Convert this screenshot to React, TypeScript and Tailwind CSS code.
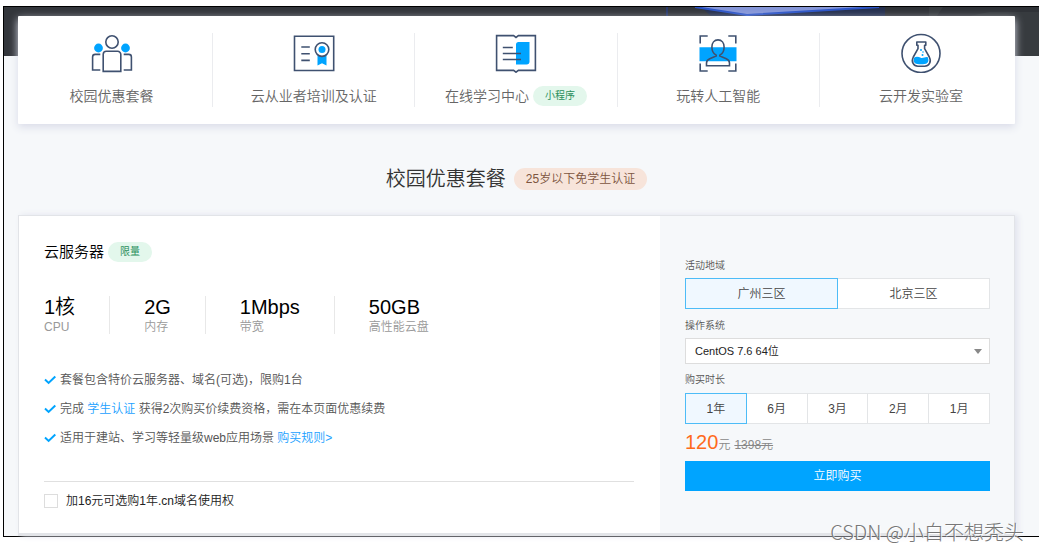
import { useState, type ReactNode } from "react";

interface Feature {
  label: string;
  tag?: string;
  icon: ReactNode;
}

const features: Feature[] = [
  { label: "校园优惠套餐", icon: <CampusIcon /> },
  { label: "云从业者培训及认证", icon: <CertificateIcon /> },
  { label: "在线学习中心", tag: "小程序", icon: <BookIcon /> },
  { label: "玩转人工智能", icon: <FaceIcon /> },
  { label: "云开发实验室", icon: <LabIcon /> },
];

const specs = [
  { value: "1核", label: "CPU" },
  { value: "2G", label: "内存" },
  { value: "1Mbps", label: "带宽" },
  { value: "50GB", label: "高性能云盘" },
];

const regions = ["广州三区", "北京三区"];
const durations = ["1年", "6月", "3月", "2月", "1月"];

function CampusIcon() {
  return (
    <svg width="42" height="40" viewBox="0 0 42 40" fill="none" stroke="#3f5170" strokeWidth="1.6">
      <circle cx="7.5" cy="15" r="4.4" fill="#00a4ff" stroke="none" />
      <circle cx="34.5" cy="15" r="4.4" fill="#00a4ff" stroke="none" />
      <circle cx="21" cy="9" r="6.2" />
      <path d="M12.2 38.4V21.5a3.2 3.2 0 0 1 3.2-3.2h11.2a3.2 3.2 0 0 1 3.2 3.2v16.9z" />
      <path d="M9.3 21.4H4.2a2.6 2.6 0 0 0-2.6 2.6v13h7.7M32.7 21.4h5.1a2.6 2.6 0 0 1 2.6 2.6v13h-7.7" />
    </svg>
  );
}

function CertificateIcon() {
  return (
    <svg width="42" height="40" viewBox="0 0 42 40" fill="none" stroke="#3f5170" strokeWidth="1.6">
      <path d="M1.5 3.3h39.2v34.2H1.5z" />
      <path d="M8.3 14h8.5M8.3 20.7h8.5M8.3 27.4h8.5" />
      <path d="M24.5 22h9v10.5l-4.5-2.2-4.5 2.2z" fill="#00a4ff" stroke="none" />
      <circle cx="29" cy="16.6" r="6.8" fill="#fff" />
      <circle cx="29" cy="16.6" r="3.5" fill="#00a4ff" stroke="none" />
    </svg>
  );
}

function BookIcon() {
  return (
    <svg width="42" height="40" viewBox="0 0 42 40" fill="none" stroke="#3f5170" strokeWidth="1.6">
      <path d="M1.6 2.6h17l2.4 1.8 2.4-1.8h17v34.8h-17L21 39.2l-2.4-1.8h-17z" />
      <path d="M21 11.5a2.5 2.5 0 0 1 2.5-2.5h11v19.5a3 3 0 0 1-3 3H21z" fill="#00a4ff" stroke="none" />
      <path d="M7.8 14.5h10M7.8 20.5H26M7.8 26.5H26" />
    </svg>
  );
}

function FaceIcon() {
  return (
    <svg width="42" height="40" viewBox="0 0 42 40" fill="none" stroke="#3f5170" strokeWidth="1.6">
      <path d="M2.5 14.2h37v14h-37z" fill="#00a4ff" stroke="none" />
      <path d="M3.2 10.5V3h7.5M31.3 3h7.5v7.5M3.2 30.5V38h7.5M31.3 38h7.5v-7.5" />
      <path d="M21 6.9c-3.800 0-6.100 3.100-6.100 7 0 3.800 1.900 7 4.300 8.300v.8l-6.500 2.700c-2 .9-3.200 2.200-3.200 4.200v2.900h23v-2.900c0-2-1.200-3.300-3.200-4.200L22.800 23v-.8c2.400-1.300 4.300-4.500 4.300-8.300 0-3.900-2.300-7-6.100-7z" />
    </svg>
  );
}

function LabIcon() {
  return (
    <svg width="42" height="40" viewBox="0 0 42 40" fill="none" stroke="#3f5170" strokeWidth="1.600">
      <circle cx="21" cy="20.500" r="19" />
      <path d="M14.300 24.500c2.300-1.600 4.500-.6 6.500.3 2.300.9 4.500-1.300 7-.600 1.200 2.900.6 4.900-.9 6.100-1.600 1.300-10.200 1.300-11.800 0-1.500-1.200-2-3.200-.8-5.800z" fill="#00a4ff" stroke="none" />
      <path d="M18 12.300h-1.200V9h9v3.300h-1.200v3.400l4.700 8.300c2.500 4.800-.3 9.300-4.700 9.300H18c-4.400 0-7.200-4.500-4.700-9.300l4.700-8.300z" strokeLinejoin="round" />
      <circle cx="21" cy="17" r="1" fill="#00a4ff" stroke="none" />
      <circle cx="23" cy="19" r=".8" fill="#00a4ff" stroke="none" />
      <circle cx="22.500" cy="22" r="1" fill="#00a4ff" stroke="none" />
    </svg>
  );
}

function Tag({ children }: { children: ReactNode }) {
  return (
    <span className="rounded-full bg-[#e3f7ec] px-3 text-[10px] leading-5 font-normal text-[#2a8f5c]">
      {children}
    </span>
  );
}

function Perk({ children }: { children: ReactNode }) {
  return (
    <li className="flex items-center gap-1">
      <svg width="12" height="10" viewBox="0 0 12 10" fill="none" stroke="#00a4ff" strokeWidth="2">
        <path d="M1 4.500l3.600 3.400L11.300 1.500" />
      </svg>
      <span>{children}</span>
    </li>
  );
}

interface SegmentedProps {
  label: string;
  options: string[];
}

function Segmented({ label, options }: SegmentedProps) {
  const [selected, setSelected] = useState(options[0]);

  return (
    <div role="group" aria-label={label} className="flex">
      {options.map((option, index) => (
        <button
          key={option}
          type="button"
          aria-pressed={option === selected}
          onClick={() => setSelected(option)}
          className={`h-[31px] flex-1 border text-xs text-[#444] ${index > 0 ? "-ml-px" : ""} ${
            option === selected ? "z-10 border-[#4dbcf7] bg-[#f0f8ff]" : "border-[#e3e5e7] bg-white"
          }`}
        >
          {option}
        </button>
      ))}
    </div>
  );
}

function FeatureNav() {
  return (
    <nav className="relative -mt-10 overflow-hidden rounded-[1px] bg-white py-[17px] shadow-[0_3px_8px_#d9dbe8]">
      <ul className="-mx-[7px] grid grid-cols-5">
        {features.map((feature) => (
          <li key={feature.label} className="h-[74px] border-r border-[#ebecef] last:border-r-0">
            <a href="#" className="flex h-[73px] flex-col items-center justify-between text-sm text-[#666]">
              {feature.icon}
              <span className="flex items-center gap-1 leading-5">
                {feature.label}
                {feature.tag && <Tag>{feature.tag}</Tag>}
              </span>
            </a>
          </li>
        ))}
      </ul>
    </nav>
  );
}

function ServerPlan() {
  return (
    <div className="flex-1 bg-white pt-6 pr-[26px] pl-[25px]">
      <h3 className="flex items-center gap-1 text-[15px] leading-6 text-black">
        云服务器 <Tag>限量</Tag>
      </h3>
      <dl className="mt-8 flex">
        {specs.map((spec) => (
          <div
            key={spec.label}
            className="flex h-[38px] flex-col-reverse justify-center border-l border-[#e8e8e8] px-[34px] first:border-l-0 first:pl-0"
          >
            <dt className="text-xs leading-4 text-[#999]">{spec.label}</dt>
            <dd className="text-xl leading-6 text-black">{spec.value}</dd>
          </div>
        ))}
      </dl>
      <ul className="mt-9 flex flex-col gap-[9px] text-xs leading-5 text-[#555]">
        <Perk>套餐包含特价云服务器、域名(可选)，限购1台</Perk>
        <Perk>
          完成 <a href="#" className="text-[#1a9fff]">学生认证</a> 获得2次购买价续费资格，需在本页面优惠续费
        </Perk>
        <Perk>
          适用于建站、学习等轻量级web应用场景 <a href="#" className="text-[#1a9fff]">购买规则&gt;</a>
        </Perk>
      </ul>
      <label className="mt-[33px] flex items-center gap-2 border-t border-[#e0e0e0] pt-[9px] text-xs leading-5 text-[#222]">
        <input type="checkbox" className="size-[14px] appearance-none border border-[#ddd] bg-white checked:bg-[#00a4ff]" />
        加16元可选购1年.cn域名使用权
      </label>
    </div>
  );
}

function OrderPanel() {
  return (
    <form className="w-[354px] pt-[42px] pr-6 pb-[42px] pl-[25px] text-[10px] text-[#555]">
      <p className="mb-1 leading-4">活动地域</p>
      <Segmented label="活动地域" options={regions} />
      <label htmlFor="os" className="mt-[9px] mb-1 block leading-4">操作系统</label>
      <div className="relative">
        <select id="os" className="block h-[26px] w-full appearance-none border border-[#ddd] bg-white px-[9px] text-[11px] text-[#222]">
          <option>CentOS 7.6 64位</option>
        </select>
        <svg width="8" height="5" viewBox="0 0 8 5" className="pointer-events-none absolute top-[11px] right-2">
          <path d="M0 0h8L4 5z" fill="#888" />
        </svg>
      </div>
      <p className="mt-2 mb-[5px] leading-4">购买时长</p>
      <Segmented label="购买时长" options={durations} />
      <p className="my-1 flex h-[29px] items-baseline text-xs leading-7 text-[#888]">
        <span className="text-xl leading-7 text-[#ff6a1a]">120</span>元<del className="ml-1">1398元</del>
      </p>
      <button type="button" className="block h-[30px] w-full bg-[#00a4ff] text-xs text-white">立即购买</button>
    </form>
  );
}

export default function App() {
  return (
    <div className="relative bg-white pt-[6px] pb-[15px] pl-[3px] font-['Liberation_Sans','Noto_Sans_CJK_SC',sans-serif] font-[350]">
      <main className="border-y border-l border-black bg-[#f6f8fa]">
        <div className="flex h-[49px] justify-end overflow-hidden bg-[#33363b]">
          <svg width="400" height="49" viewBox="0 0 400 49">
            <path d="M62 0h184v9H72z" fill="#25304f" />
            <path d="M246 0h154v49H246z" fill="#2f3237" />
            <path d="M290 9V0h14l-6 9zM330 9l20-4h50v44h-70z" fill="#373b3f" />
            <path d="M58 0h180L108 8z" fill="#8596d8" />
            <path d="M56 0l52 8L240 0" fill="none" stroke="#2c55c8" strokeWidth="2" />
            <path d="M28 0v9" stroke="#2a3a6b" strokeWidth="2" />
          </svg>
        </div>
        <div className="pr-6 pl-[14px]">
          <FeatureNav />
          <div className="mt-[43px] flex items-center justify-center gap-2">
            <h2 className="text-xl leading-6 text-[#333]">校园优惠套餐</h2>
            <span className="rounded-full bg-[#f7e4da] px-3 text-xs leading-[22px] text-[#7d5540]">25岁以下免学生认证</span>
          </div>
          <section className="mt-6 flex border border-b-3 border-[#e2e4e8] shadow-[3px_0_6px_#e2e4ee]">
            <ServerPlan />
            <OrderPanel />
          </section>
        </div>
      </main>
      <div className="absolute right-[15px] bottom-1 font-['Noto_Sans_CJK_SC',sans-serif] text-xl leading-8 font-light text-[#777] [text-shadow:1px_1px_0_#fff]">
        CSDN @小白不想秃头
      </div>
    </div>
  );
}
